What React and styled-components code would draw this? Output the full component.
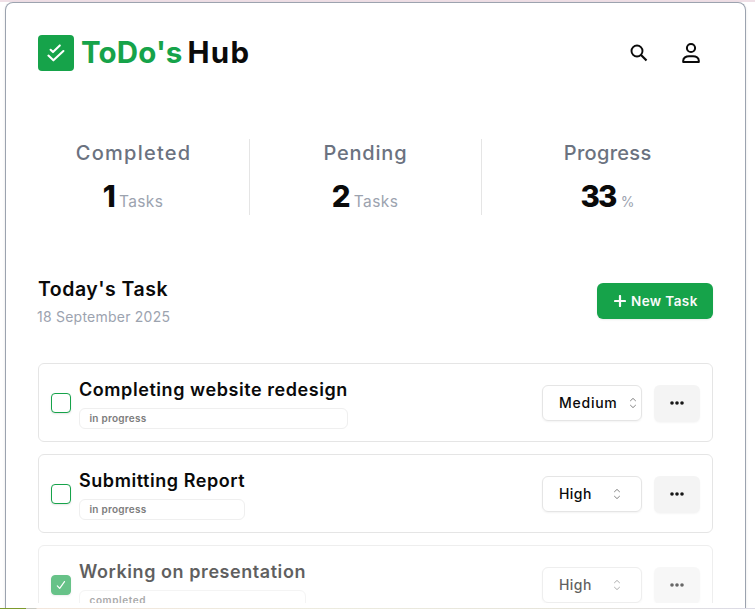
import React from "react";
import styled, { createGlobalStyle } from "styled-components";

const GlobalStyle = createGlobalStyle`
  * { box-sizing: border-box; }
  body {
    margin: 0;
    overflow: hidden;
    background: #fff;
    font-family: Inter, "Open Sans", sans-serif;
    color: #0a0a0a;
  }
  h1, h2, h3, p { margin: 0; }
  button { font-family: inherit; }
`;

const Page = styled.div`
  height: 609px;
  display: flex;
  flex-direction: column;
`;

const TopStrip = styled.div`
  height: 2px;
  flex: none;
  background: #efdfe6;
`;

const BottomStrip = styled.div`
  height: 1px;
  flex: none;
  background: linear-gradient(
    90deg,
    #7d9a2c 0 26px,
    #c9c9c0 26px 36px,
    #f3e6dc 37px,
    #ecebdf 330px,
    #e6e4da 560px,
    #dcdbe6 755px
  );
`;

const Frame = styled.main`
  flex: 1;
  min-height: 0;
  width: 741px;
  margin-left: 5px;
  padding: 32px 32px 0;
  border: 1px solid #9ca3af;
  border-bottom: 0;
  border-radius: 8px 8px 0 0;
  box-shadow: 0 1px 3px rgba(0, 0, 0, 0.1);
  display: flex;
  flex-direction: column;
`;

const Header = styled.header`
  height: 36px;
  padding-right: 10px;
  display: flex;
  align-items: center;
  justify-content: space-between;
`;

const Brand = styled.div`
  display: flex;
  align-items: center;
  gap: 7px;
`;

const LogoTile = styled.div`
  width: 36px;
  height: 36px;
  border-radius: 4px;
  background: #16a34a;
  svg { display: block; }
`;

const BrandName = styled.h1`
  display: flex;
  gap: 5px;
  font-size: 29.5px;
  font-weight: 700;
  line-height: 34px;
  padding-bottom: 2px;
`;

const BrandWord = styled.span`
  color: ${(p) => (p.$accent ? "#16a34a" : "#0a0a0a")};
  letter-spacing: ${(p) => (p.$accent ? "0.15px" : "1.3px")};
`;

const Actions = styled.div`
  display: flex;
  gap: 28px;
`;

const IconButton = styled.button`
  width: 24px;
  height: 24px;
  padding: 0;
  border: 0;
  background: none;
  color: #0a0a0a;
  svg { display: block; }
`;

const Stats = styled.section`
  margin-top: 68px;
  height: 76px;
  display: grid;
  grid-template-columns: 212px 232px 231px;
  grid-template-rows: 76px;
`;

const Stat = styled.div`
  display: flex;
  flex-direction: column;
  align-items: center;
  gap: 9px;
  border-right: ${(p) => (p.$last ? "0" : "1px solid #e5e5e5")};
  padding-left: ${(p) => p.$padLeft || 0}px;
  padding-right: ${(p) => p.$padRight || 0}px;
`;

const StatLabel = styled.p`
  font-size: 20px;
  font-weight: 500;
  line-height: 28px;
  color: #6b7280;
  letter-spacing: ${(p) => p.$tracking}px;
  margin-right: -${(p) => p.$tracking}px;
`;

const StatValue = styled.p`
  display: flex;
  align-items: baseline;
  gap: ${(p) => p.$gap}px;
  line-height: 40px;
`;

const StatNumber = styled.span`
  font-size: 29.5px;
  font-weight: 800;
  letter-spacing: -1.8px;
`;

const StatUnit = styled.span`
  font-size: ${(p) => (p.$small ? "14px" : "15.5px")};
  letter-spacing: ${(p) => (p.$small ? 0 : "0.4px")};
  color: #9ca3af;
`;

const SectionHead = styled.section`
  margin-top: 60px;
  display: flex;
  align-items: center;
  justify-content: space-between;
`;

const Heading = styled.h2`
  font-size: 19.5px;
  font-weight: 600;
  line-height: 28px;
  letter-spacing: 0.5px;
`;

const DateText = styled.p`
  margin-top: 4px;
  margin-left: -1px;
  font-size: 14px;
  line-height: 20px;
  letter-spacing: 0.23px;
  color: #9ca3af;
`;

const NewTaskButton = styled.button`
  width: 116px;
  height: 36px;
  padding: 0 0 0 17px;
  border: 0;
  border-radius: 6px;
  background: #16a34a;
  box-shadow: 0 1px 2px rgba(0, 0, 0, 0.08);
  color: #fafafa;
  display: flex;
  align-items: center;
  gap: 5px;
  font-size: 13.5px;
  font-weight: 600;
  letter-spacing: 0.4px;
`;

const TaskList = styled.ul`
  list-style: none;
  margin: 36px 0 0;
  padding: 0;
  height: 240px;
  overflow: hidden;
  display: flex;
  flex-direction: column;
  gap: 12px;
`;

const TaskRow = styled.li`
  flex: none;
  height: 79px;
  padding: 12px;
  border: 1px solid #e5e5e5;
  border-radius: 6px;
  display: flex;
  align-items: flex-start;
  opacity: ${(p) => (p.$done ? 0.65 : 1)};
`;

const Checkbox = styled.span`
  width: 20px;
  height: 20px;
  margin: 17px 8px 0 0;
  border: 1px solid #16a34a;
  border-radius: 4px;
  background: ${(p) => (p.$checked ? "#16a34a" : "#fff")};
  box-shadow: 0 1px 2px rgba(0, 0, 0, 0.1);
  display: flex;
  align-items: center;
  justify-content: center;
`;

const TaskInfo = styled.div`
  display: flex;
  flex-direction: column;
  gap: 5px;
`;

const TaskTitle = styled.h3`
  font-size: 18px;
  font-weight: 600;
  line-height: 27px;
  letter-spacing: 0.56px;
`;

const Status = styled.span`
  height: 21px;
  padding-left: 9.5px;
  border: 1px solid #efefef;
  border-radius: 6px;
  font-size: 10px;
  font-weight: 600;
  line-height: 19px;
  letter-spacing: ${(p) => (p.$done ? "0.6px" : "0.25px")};
  color: #7c7c7c;
`;

const Priority = styled.div`
  width: 100px;
  height: 36px;
  margin: 9px 12px 0 auto;
  padding-left: 16px;
  border: 1px solid #e5e5e5;
  border-radius: 6px;
  box-shadow: 0 1px 2px rgba(0, 0, 0, 0.05);
  display: flex;
  align-items: center;
  gap: 12px;
`;

const PriorityLabel = styled.span`
  min-width: 42px;
  padding-bottom: 1px;
  font-size: 14px;
  line-height: 20px;
  font-weight: 500;
  letter-spacing: ${(p) => (p.$wide ? "0.75px" : "0.45px")};
  margin-right: ${(p) => (p.$wide ? "-1px" : "0")};
`;

const MoreButton = styled.button`
  width: 46px;
  height: 37px;
  margin-top: 9px;
  padding: 0;
  border: 0;
  border-radius: 6px;
  background: #f4f4f4;
  box-shadow: 0 1px 2px rgba(0, 0, 0, 0.04);
  svg { display: block; }
`;

const LogoIcon = () => (
  <svg width="36" height="36" viewBox="0 0 36 36" fill="none" stroke="#fff" strokeWidth="2.1" strokeLinecap="round" strokeLinejoin="round">
    <path d="M12.6 14.8 15 17.1 21.8 10.4" />
    <path d="M10.4 20.6 15.4 25.3 25.4 16" />
  </svg>
);

const SearchIcon = () => (
  <svg width="24" height="24" viewBox="0 0 24 24" fill="none" stroke="currentColor" strokeWidth="1.9">
    <circle cx="10" cy="10" r="5.5" />
    <path d="M13.8 13.8 19.5 19.5" strokeWidth="2.2" />
  </svg>
);

const UserIcon = () => (
  <svg width="24" height="24" viewBox="0 0 24 24" fill="none" stroke="currentColor" strokeWidth="2" strokeLinejoin="round">
    <circle cx="12" cy="7" r="4.1" />
    <path d="M4.2 21V19.8C4.2 16.8 7 15.2 10 15.2H14C17 15.2 19.8 16.8 19.8 19.8V21Z" />
  </svg>
);

const PlusIcon = () => (
  <svg width="12" height="12" viewBox="0 0 12 12" stroke="currentColor" strokeWidth="2.2" strokeLinecap="round">
    <path d="M6 1V11M1 6H11" />
  </svg>
);

const CheckIcon = () => (
  <svg width="12" height="12" viewBox="0 0 12 12" fill="none" stroke="#fff" strokeWidth="1.2" strokeLinecap="round" strokeLinejoin="round">
    <path d="M2.3 6.9 4.7 9.4 9.5 2.6" />
  </svg>
);

const ChevronsIcon = () => (
  <svg width="8" height="12" viewBox="0 0 8 12" fill="none" stroke="#858585" strokeWidth="1">
    <path d="M1.2 4 4 1.4 6.8 4M1.2 8 4 10.6 6.8 8" />
  </svg>
);

const DotsIcon = () => (
  <svg width="46" height="37" viewBox="0 0 46 37" fill="#171717">
    <circle cx="18" cy="18" r="1.8" />
    <circle cx="23" cy="18" r="1.8" />
    <circle cx="28" cy="18" r="1.8" />
  </svg>
);

const tasks = [
  { title: "Completing website redesign", status: "in progress", priority: "Medium" },
  { title: "Submitting Report", status: "in progress", priority: "High" },
  { title: "Working on presentation", status: "completed", priority: "High" },
];

export default function App() {
  return (
    <Page>
      <GlobalStyle />
      <TopStrip />
      <Frame>
        <Header>
          <Brand>
            <LogoTile><LogoIcon /></LogoTile>
            <BrandName>
              <BrandWord $accent>ToDo's</BrandWord>
              <BrandWord>Hub</BrandWord>
            </BrandName>
          </Brand>
          <Actions>
            <IconButton aria-label="Search"><SearchIcon /></IconButton>
            <IconButton aria-label="Profile"><UserIcon /></IconButton>
          </Actions>
        </Header>

        <Stats>
          <Stat $padRight={21}>
            <StatLabel $tracking={1.25}>Completed</StatLabel>
            <StatValue $gap={5}>
              <StatNumber>1</StatNumber>
              <StatUnit>Tasks</StatUnit>
            </StatValue>
          </Stat>
          <Stat $padRight={1}>
            <StatLabel $tracking={0.8}>Pending</StatLabel>
            <StatValue $gap={5}>
              <StatNumber>2</StatNumber>
              <StatUnit>Tasks</StatUnit>
            </StatValue>
          </Stat>
          <Stat $last $padLeft={20}>
            <StatLabel $tracking={0.3}>Progress</StatLabel>
            <StatValue $gap={5}>
              <StatNumber>33</StatNumber>
              <StatUnit $small>%</StatUnit>
            </StatValue>
          </Stat>
        </Stats>

        <SectionHead>
          <div>
            <Heading>Today's Task</Heading>
            <DateText>18 September 2025</DateText>
          </div>
          <NewTaskButton><PlusIcon />New Task</NewTaskButton>
        </SectionHead>

        <TaskList>
          {tasks.map((task) => {
            const done = task.status === "completed";
            return (
              <TaskRow key={task.title} $done={done}>
                <Checkbox $checked={done}>{done && <CheckIcon />}</Checkbox>
                <TaskInfo>
                  <TaskTitle>{task.title}</TaskTitle>
                  <Status $done={done}>{task.status}</Status>
                </TaskInfo>
                <Priority>
                  <PriorityLabel $wide={task.priority === "Medium"}>{task.priority}</PriorityLabel>
                  <ChevronsIcon />
                </Priority>
                <MoreButton aria-label="More options"><DotsIcon /></MoreButton>
              </TaskRow>
            );
          })}
        </TaskList>
      </Frame>
      <BottomStrip />
    </Page>
  );
}
